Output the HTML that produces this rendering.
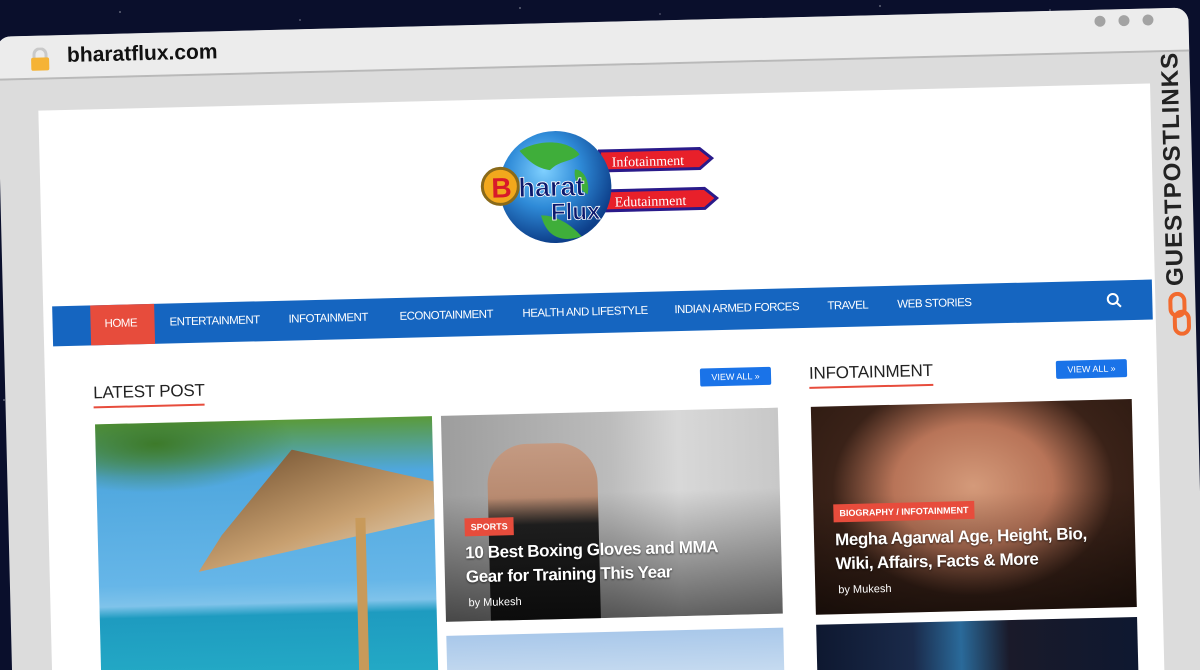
<!DOCTYPE html>
<html><head><meta charset="utf-8"><style>
*{margin:0;padding:0;box-sizing:border-box}
html,body{width:1200px;height:670px;overflow:hidden}
body{background:#0a0f2c;font-family:"Liberation Sans",sans-serif;position:relative}
.stars{position:absolute;inset:0;background:
radial-gradient(1px 1px at 120px 12px,#fff,transparent),radial-gradient(1px 1px at 300px 20px,#ccd,transparent),radial-gradient(1px 1px at 520px 8px,#fff,transparent),radial-gradient(1px 1px at 660px 14px,#aab,transparent),radial-gradient(1px 1px at 880px 6px,#fff,transparent),radial-gradient(1px 1px at 1050px 10px,#ccd,transparent),radial-gradient(1px 1px at 4px 400px,#fff,transparent);}
#clip{position:absolute;left:0;top:0;width:1200px;height:670px;overflow:hidden}
#w{position:absolute;left:0;top:0;width:1200px;height:670px;transform:rotate(-1.4deg);transform-origin:600px 335px}
.frame{position:absolute;left:4px;top:22px;width:1192px;height:680px;background:#dcdcdc;border-radius:14px 14px 0 0;overflow:hidden}
.tb{position:absolute;left:0;top:0;width:100%;height:44px;background:#ececec;border-bottom:2px solid #b9b9b9}
.url{position:absolute;left:70px;top:9px;font-size:21px;font-weight:bold;color:#111}
.lock{position:absolute;left:32px;top:12px}
.dot{position:absolute;top:6px;width:11px;height:11px;border-radius:50%;background:#a3a3a3}
.page{position:absolute;width:1112px;height:610px;background:#fff;overflow:hidden}
.gpl{position:absolute;transform-origin:0 0;transform:rotate(-90deg);font-weight:900;font-size:24px;color:#222;letter-spacing:1px;white-space:nowrap}
.nav{position:absolute;left:12px;top:196px;width:1100px;height:40px;background:#1565c0}
.nav span{position:absolute;top:13px;color:#fff;font-size:11.5px;letter-spacing:-0.5px;white-space:nowrap}
.home{position:absolute;left:38px;top:0;width:64px;height:40px;background:#e74c3c}
.h2{position:absolute;font-size:17px;color:#222;letter-spacing:-0.2px}
.h2:after{content:"";position:absolute;left:0;bottom:-5px;width:100%;height:2px;background:#e74c3c}
.va{position:absolute;width:71px;height:18px;background:#1a73e8;color:#fff;font-size:9px;line-height:18px;text-align:center;border-radius:2px}
.card{position:absolute;overflow:hidden}
.tag{position:absolute;background:#e74c3c;color:#fff;font-size:9px;font-weight:bold;padding:4px 6px}
.tt{position:absolute;color:#fff;font-size:17px;font-weight:bold;line-height:24px;text-shadow:0 1px 2px rgba(0,0,0,.6);letter-spacing:-0.4px}
.by{position:absolute;color:#fff;font-size:11px}
</style></head><body>
<div class="stars"></div>
<div id="clip">
<div id="w">
<div class="frame">
 <div class="tb">
  <svg class="lock" width="22" height="24" viewBox="0 0 22 24"><path d="M5 11V7a6 6 0 0 1 12 0v4" fill="none" stroke="#c9c9c9" stroke-width="3"/><rect x="2" y="10" width="18" height="13" rx="2" fill="#f5b335"/></svg>
  <div class="url">bharatflux.com</div>
  <div class="dot" style="left:1098px"></div><div class="dot" style="left:1122px"></div><div class="dot" style="left:1146px"></div>
 </div>
</div>
<div class="page" style="left:44px;top:97px">
 <svg style="position:absolute;left:440px;top:32px" width="240" height="120" viewBox="0 0 240 120">
  <defs><radialGradient id="g" cx="40%" cy="35%" r="65%"><stop offset="0" stop-color="#7fd0ff"/><stop offset=".5" stop-color="#2f8bd8"/><stop offset="1" stop-color="#0d3f8a"/></radialGradient></defs>
  <path d="M120 22h100l12 10-12 10H120z" fill="#e8202a" stroke="#2a1a8a" stroke-width="3"/>
  <path d="M120 62h104l12 10-12 10H120z" fill="#e8202a" stroke="#2a1a8a" stroke-width="3"/>
  <text x="132" y="38" font-family="Liberation Serif" font-size="14" fill="#fff">Infotainment</text>
  <text x="134" y="78" font-family="Liberation Serif" font-size="14" fill="#fff">Edutainment</text>
  <circle cx="75" cy="57" r="56" fill="url(#g)"/>
  <path d="M40 20c20-12 50-10 60 5-10 8-20 5-30 15-12-2-20-8-30-20zM60 85c15 0 30 10 40 22-20 6-35 0-40-22zM95 40c10 0 15 15 12 25-8-5-14-15-12-25z" fill="#3fae3a"/>
  <circle cx="20" cy="55" r="18" fill="#f2a81d" stroke="#8a6a1a" stroke-width="3"/>
  <text x="11" y="66" font-family="Liberation Sans" font-weight="bold" font-size="28" fill="#d8182a">B</text>
  <text x="38" y="66" font-family="Liberation Sans" font-weight="bold" font-size="27" fill="#0c1a6e" stroke="#fff" stroke-width=".8">harat</text>
  <text x="70" y="90" font-family="Liberation Sans" font-weight="bold" font-size="24" fill="#0c1a6e" stroke="#fff" stroke-width=".8">Flux</text>
 </svg>
 <div class="nav" style="left:9px">
  <div class="home"></div>
  <span style="left:52px">HOME</span><span style="left:117px">ENTERTAINMENT</span><span style="left:236px">INFOTAINMENT</span><span style="left:347px">ECONOTAINMENT</span><span style="left:470px">HEALTH AND LIFESTYLE</span><span style="left:622px">INDIAN ARMED FORCES</span><span style="left:775px">TRAVEL</span><span style="left:845px">WEB STORIES</span>
  <svg style="position:absolute;left:1054px;top:12px" width="16" height="16" viewBox="0 0 16 16"><circle cx="6.5" cy="6.5" r="5" fill="none" stroke="#fff" stroke-width="2"/><path d="M10 10l4.5 4.5" stroke="#fff" stroke-width="2"/></svg>
 </div>
 <div class="h2" style="left:48px;top:274px">LATEST POST</div>
 <div class="va" style="left:655px;top:274px">VIEW ALL »</div>
 <div class="h2" style="left:764px;top:272px">INFOTAINMENT</div>
 <div class="va" style="left:1011px;top:275px">VIEW ALL »</div>
 <div class="card" style="left:49px;top:315px;width:337px;height:295px;background:linear-gradient(180deg,#5a9a3a 0,#4fa7de 18%,#66b6e8 55%,#7fc3ea 62%,#1e9bc0 66%,#27b3c9 100%)">
  <div style="position:absolute;left:100px;top:30px;width:240px;height:120px;background:linear-gradient(160deg,#6b4a2a,#c8a070 60%,#e8dcc8);clip-path:polygon(40% 0,100% 30%,100% 60%,0 100%,10% 70%)"></div>
  <div style="position:absolute;left:258px;top:100px;width:10px;height:210px;background:#c89a5a"></div>
  <div style="position:absolute;left:0;top:0;width:200px;height:70px;background:radial-gradient(ellipse at 30% 30%,#3d7a2a,transparent 70%)"></div>
 </div>
 <div class="card" style="left:395px;top:315px;width:337px;height:206px;background:linear-gradient(90deg,#9d9d9d,#bcbcbc 50%,#d8d8d8 70%,#c8c8c8)">
  <div style="position:absolute;left:45px;top:30px;width:110px;height:180px;background:linear-gradient(180deg,#c49a82 0,#b88a70 30%,#222 45%,#1a1a1a 100%);border-radius:40px 40px 0 0"></div>
  <div style="position:absolute;left:0;top:80px;width:100%;height:126px;background:linear-gradient(180deg,transparent,rgba(0,0,0,.55))"></div>
  <div class="tag" style="left:21px;top:103px">SPORTS</div>
  <div class="tt" style="left:21px;top:126px">10 Best Boxing Gloves and MMA<br>Gear for Training This Year</div>
  <div class="by" style="left:23px;top:182px">by Mukesh</div>
 </div>
 <div class="card" style="left:395px;top:535px;width:337px;height:75px;background:linear-gradient(180deg,#a9c8ea,#dbe8f4)"></div>
 <div class="card" style="left:765px;top:315px;width:321px;height:208px;background:radial-gradient(ellipse at 50% 40%,#d49a7a 0,#b87458 35%,#3a2218 62%,#2a1810 100%)">
  <div style="position:absolute;left:0;top:90px;width:100%;height:118px;background:linear-gradient(180deg,transparent,rgba(0,0,0,.45))"></div>
  <div class="tag" style="left:20px;top:98px">BIOGRAPHY / INFOTAINMENT</div>
  <div class="tt" style="left:21px;top:122px">Megha Agarwal Age, Height, Bio,<br>Wiki, Affairs, Facts &amp; More</div>
  <div class="by" style="left:23px;top:178px">by Mukesh</div>
 </div>
 <div class="card" style="left:765px;top:533px;width:321px;height:77px;background:linear-gradient(90deg,#0e1830,#1a2a4a 30%,#2a6a9a 45%,#1a1a2a 60%,#0e1830)"></div>
</div>
<div class="gpl" style="left:1163px;top:300px">GUESTPOSTLINKS</div>
<svg style="position:absolute;left:1168px;top:306px" width="24" height="44" viewBox="0 0 24 44"><rect x="3" y="2" width="14" height="22" rx="7" fill="none" stroke="#f26a2e" stroke-width="4"/><rect x="7" y="20" width="14" height="22" rx="7" fill="none" stroke="#f26a2e" stroke-width="4"/></svg>
</div>
</div>
</body></html>
